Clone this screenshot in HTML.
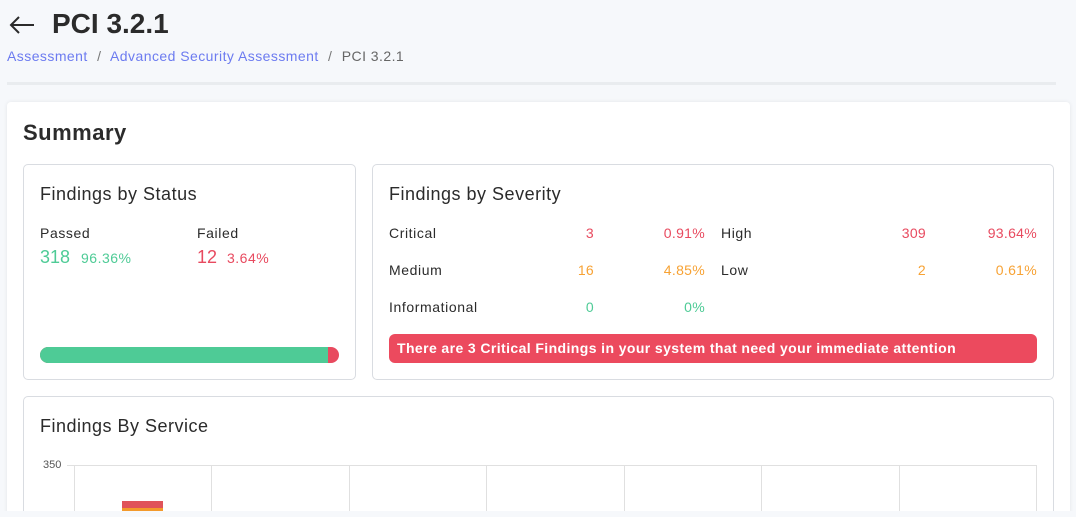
<!DOCTYPE html>
<html><head><style>
*{margin:0;padding:0;box-sizing:border-box}
html,body{width:1076px;height:517px;overflow:hidden}
body{background:#f6f8fb;font-family:"Liberation Sans",sans-serif;color:#2b2b2b;position:relative}
.a{position:absolute;white-space:nowrap}
.card{position:absolute;background:#fff;border:1px solid #d9dce1;border-radius:5px}
.r{color:#e84a5f}.o{color:#f7a234}.g{color:#4ecb96}
.lab{font-size:14px;color:#2b2b2b;letter-spacing:.6px}
.num{font-size:14px;text-align:right;letter-spacing:.3px}
.h{font-size:18px;letter-spacing:.5px}
</style></head><body>
<svg class="a" style="left:8px;top:15px" width="28" height="20" viewBox="0 0 28 20"><path d="M26 10H3M11 2L3 10L11 18" fill="none" stroke="#2b2b2b" stroke-width="2"/></svg>
<div class="a" style="left:52px;top:8px;font-size:28px;font-weight:bold;color:#2b2b2b">PCI 3.2.1</div>
<div class="a" style="left:7px;top:48px;font-size:14px;letter-spacing:.45px;color:#6c7bf0">Assessment <span style="color:#777;margin:0 5px">/</span> Advanced Security Assessment <span style="color:#777;margin:0 5px">/</span> <span style="color:#666">PCI 3.2.1</span></div>
<div class="a" style="left:7px;top:82px;width:1049px;height:3px;background:#e9ecef"></div>
<div class="a" style="left:7px;top:102px;width:1063px;height:415px;background:#fff;border-radius:4px;box-shadow:0 0 4px rgba(0,0,0,.08)"></div>
<div class="a" style="left:23px;top:120px;font-size:22px;letter-spacing:.5px;font-weight:bold">Summary</div>

<div class="card" style="left:23px;top:164px;width:333px;height:216px"></div>
<div class="a h" style="left:40px;top:184px">Findings by Status</div>
<div class="a lab" style="left:40px;top:225px">Passed</div>
<div class="a lab" style="left:197px;top:225px">Failed</div>
<div class="a g" style="left:40px;top:247px;font-size:18px">318</div>
<div class="a g" style="left:81px;top:250px;font-size:14px;letter-spacing:.5px">96.36%</div>
<div class="a r" style="left:197px;top:247px;font-size:18px">12</div>
<div class="a r" style="left:227px;top:250px;font-size:14px;letter-spacing:.5px">3.64%</div>
<div class="a" style="left:40px;top:347px;width:299px;height:16px;border-radius:8px;background:#e84a5f;overflow:hidden"><div style="width:288px;height:16px;background:#4ecb96"></div></div>

<div class="card" style="left:372px;top:164px;width:682px;height:216px"></div>
<div class="a h" style="left:389px;top:184px">Findings by Severity</div>
<div class="a lab" style="left:389px;top:225px">Critical</div>
<div class="a num r" style="left:540px;top:225px;width:54px">3</div>
<div class="a num r" style="left:630px;top:225px;width:75px">0.91%</div>
<div class="a lab" style="left:721px;top:225px">High</div>
<div class="a num r" style="left:860px;top:225px;width:66px">309</div>
<div class="a num r" style="left:960px;top:225px;width:77px">93.64%</div>
<div class="a lab" style="left:389px;top:262px">Medium</div>
<div class="a num o" style="left:540px;top:262px;width:54px">16</div>
<div class="a num o" style="left:630px;top:262px;width:75px">4.85%</div>
<div class="a lab" style="left:721px;top:262px">Low</div>
<div class="a num o" style="left:860px;top:262px;width:66px">2</div>
<div class="a num o" style="left:960px;top:262px;width:77px">0.61%</div>
<div class="a lab" style="left:389px;top:299px">Informational</div>
<div class="a num g" style="left:540px;top:299px;width:54px">0</div>
<div class="a num g" style="left:630px;top:299px;width:75px">0%</div>
<div class="a" style="left:389px;top:334px;width:648px;height:29px;background:#ec4a5e;border-radius:6px;color:#fff;font-size:14px;letter-spacing:.4px;font-weight:bold;padding:6px 8px">There are 3 Critical Findings in your system that need your immediate attention</div>

<div class="card" style="left:23px;top:396px;width:1031px;height:130px"></div>
<div class="a h" style="left:40px;top:416px">Findings By Service</div>
<div class="a" style="left:43px;top:459px;font-size:11px;color:#555">350</div>
<div class="a" style="left:67px;top:465px;width:970px;height:1px;background:#e0e0e0"></div>
<div class="a" style="left:74px;top:465px;width:1px;height:50px;background:#e0e0e0"></div>
<div class="a" style="left:211px;top:465px;width:1px;height:50px;background:#e0e0e0"></div>
<div class="a" style="left:349px;top:465px;width:1px;height:50px;background:#e0e0e0"></div>
<div class="a" style="left:486px;top:465px;width:1px;height:50px;background:#e0e0e0"></div>
<div class="a" style="left:624px;top:465px;width:1px;height:50px;background:#e0e0e0"></div>
<div class="a" style="left:761px;top:465px;width:1px;height:50px;background:#e0e0e0"></div>
<div class="a" style="left:899px;top:465px;width:1px;height:50px;background:#e0e0e0"></div>
<div class="a" style="left:1036px;top:465px;width:1px;height:50px;background:#e0e0e0"></div>
<div class="a" style="left:122px;top:501px;width:41px;height:7px;background:#e0535a"></div>
<div class="a" style="left:122px;top:508px;width:41px;height:4px;background:#f39a2c"></div>
<div class="a" style="left:0;top:511px;width:1076px;height:6px;background:#f6f8fb"></div>
</body></html>
